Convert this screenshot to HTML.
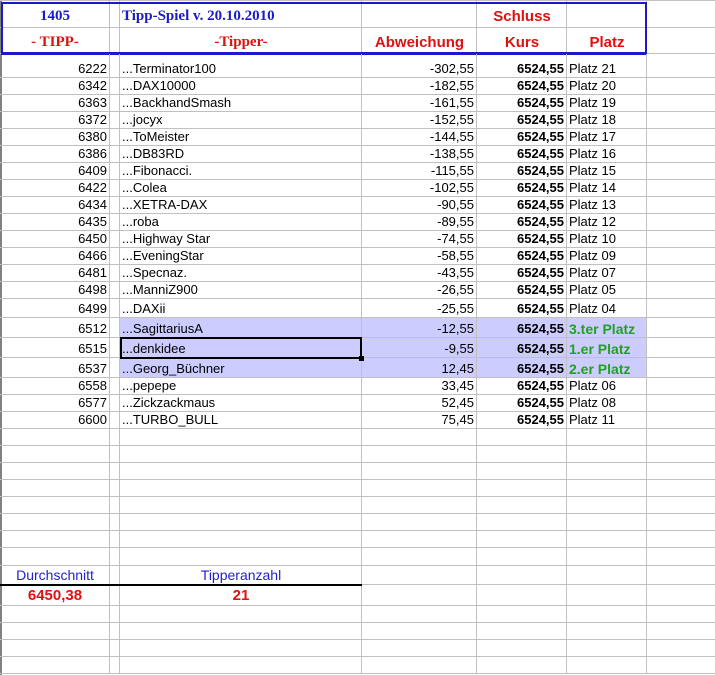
<!DOCTYPE html>
<html><head><meta charset="utf-8"><style>
body{margin:0;width:715px;height:675px;overflow:hidden;background:#fff;font-family:"Liberation Sans",Arial,sans-serif;font-size:13px;position:relative}
.r{position:absolute;left:0;width:715px;display:flex}
.c{box-sizing:border-box;border-right:1px solid #c0c0c0;border-bottom:1px solid #c0c0c0;height:100%;white-space:nowrap;overflow:visible;padding:0 2px;display:flex;align-items:flex-end;padding-bottom:0px;line-height:16px}
.a{width:110px;justify-content:flex-end}
.s{width:10px}
.n{width:242px}
.d{width:115px;justify-content:flex-end}
.e{width:90px;justify-content:flex-end;font-weight:bold}
.f{width:80px}
.g{width:68px;border-right:none}
.hl .n,.hl .d,.hl .e,.hl .f,.hl .s2{background:#ccccff}
.gr{color:#22a022;font-weight:bold;font-size:14px}
.abs{position:absolute}
</style></head><body>
<div class="abs" style="left:0;top:0;width:2px;height:675px;background:#808080"></div>
<div class="abs" style="left:0;top:0;width:715px;height:1px;background:#c0c0c0"></div>
<div class="r" style="top:1px;height:27px"><div class="c a"></div><div class="c s"></div><div class="c n"></div><div class="c d"></div><div class="c e"></div><div class="c f"></div><div class="c g"></div></div>
<div class="r" style="top:28px;height:26px"><div class="c a"></div><div class="c s"></div><div class="c n"></div><div class="c d"></div><div class="c e"></div><div class="c f"></div><div class="c g"></div></div>
<div class="abs" style="left:1px;top:2px;width:642px;height:48px;border:2px solid #1a1acc;border-bottom:3px solid #1a1acc"></div>
<div class="abs" style="left:0;top:8px;width:110px;text-align:center;font:bold 15px 'Liberation Serif',serif;color:#1a1acc">1405</div>
<div class="abs" style="left:122px;top:8px;font:bold 15px 'Liberation Serif',serif;color:#1a1acc">Tipp-Spiel v. 20.10.2010</div>
<div class="abs" style="left:477px;top:8px;width:90px;text-align:center;font:bold 15px 'Liberation Sans',sans-serif;color:#e01010">Schluss</div>
<div class="abs" style="left:0;top:34px;width:110px;text-align:center;font:bold 15px 'Liberation Serif',serif;color:#e01010">- TIPP-</div>
<div class="abs" style="left:120px;top:34px;width:242px;text-align:center;font:bold 15px 'Liberation Serif',serif;color:#e01010">-Tipper-</div>
<div class="abs" style="left:362px;top:34px;width:115px;text-align:center;font:bold 15px 'Liberation Sans',sans-serif;color:#e01010">Abweichung</div>
<div class="abs" style="left:477px;top:34px;width:90px;text-align:center;font:bold 15px 'Liberation Sans',sans-serif;color:#e01010">Kurs</div>
<div class="abs" style="left:567px;top:34px;width:80px;text-align:center;font:bold 15px 'Liberation Sans',sans-serif;color:#e01010">Platz</div>

<div class="r" style="top:54px;height:24px"><div class="c a">6222</div><div class="c s"></div><div class="c n">...Terminator100</div><div class="c d">-302,55</div><div class="c e">6524,55</div><div class="c f">Platz 21</div><div class="c g"></div></div>
<div class="r" style="top:78px;height:17px"><div class="c a">6342</div><div class="c s"></div><div class="c n">...DAX10000</div><div class="c d">-182,55</div><div class="c e">6524,55</div><div class="c f">Platz 20</div><div class="c g"></div></div>
<div class="r" style="top:95px;height:17px"><div class="c a">6363</div><div class="c s"></div><div class="c n">...BackhandSmash</div><div class="c d">-161,55</div><div class="c e">6524,55</div><div class="c f">Platz 19</div><div class="c g"></div></div>
<div class="r" style="top:112px;height:17px"><div class="c a">6372</div><div class="c s"></div><div class="c n">...jocyx</div><div class="c d">-152,55</div><div class="c e">6524,55</div><div class="c f">Platz 18</div><div class="c g"></div></div>
<div class="r" style="top:129px;height:17px"><div class="c a">6380</div><div class="c s"></div><div class="c n">...ToMeister</div><div class="c d">-144,55</div><div class="c e">6524,55</div><div class="c f">Platz 17</div><div class="c g"></div></div>
<div class="r" style="top:146px;height:17px"><div class="c a">6386</div><div class="c s"></div><div class="c n">...DB83RD</div><div class="c d">-138,55</div><div class="c e">6524,55</div><div class="c f">Platz 16</div><div class="c g"></div></div>
<div class="r" style="top:163px;height:17px"><div class="c a">6409</div><div class="c s"></div><div class="c n">...Fibonacci.</div><div class="c d">-115,55</div><div class="c e">6524,55</div><div class="c f">Platz 15</div><div class="c g"></div></div>
<div class="r" style="top:180px;height:17px"><div class="c a">6422</div><div class="c s"></div><div class="c n">...Colea</div><div class="c d">-102,55</div><div class="c e">6524,55</div><div class="c f">Platz 14</div><div class="c g"></div></div>
<div class="r" style="top:197px;height:17px"><div class="c a">6434</div><div class="c s"></div><div class="c n">...XETRA-DAX</div><div class="c d">-90,55</div><div class="c e">6524,55</div><div class="c f">Platz 13</div><div class="c g"></div></div>
<div class="r" style="top:214px;height:17px"><div class="c a">6435</div><div class="c s"></div><div class="c n">...roba</div><div class="c d">-89,55</div><div class="c e">6524,55</div><div class="c f">Platz 12</div><div class="c g"></div></div>
<div class="r" style="top:231px;height:17px"><div class="c a">6450</div><div class="c s"></div><div class="c n">...Highway Star</div><div class="c d">-74,55</div><div class="c e">6524,55</div><div class="c f">Platz 10</div><div class="c g"></div></div>
<div class="r" style="top:248px;height:17px"><div class="c a">6466</div><div class="c s"></div><div class="c n">...EveningStar</div><div class="c d">-58,55</div><div class="c e">6524,55</div><div class="c f">Platz 09</div><div class="c g"></div></div>
<div class="r" style="top:265px;height:17px"><div class="c a">6481</div><div class="c s"></div><div class="c n">...Specnaz.</div><div class="c d">-43,55</div><div class="c e">6524,55</div><div class="c f">Platz 07</div><div class="c g"></div></div>
<div class="r" style="top:282px;height:17px"><div class="c a">6498</div><div class="c s"></div><div class="c n">...ManniZ900</div><div class="c d">-26,55</div><div class="c e">6524,55</div><div class="c f">Platz 05</div><div class="c g"></div></div>
<div class="r" style="top:299px;height:19px"><div class="c a">6499</div><div class="c s"></div><div class="c n">...DAXii</div><div class="c d">-25,55</div><div class="c e">6524,55</div><div class="c f">Platz 04</div><div class="c g"></div></div>
<div class="r hl" style="top:318px;height:20px"><div class="c a">6512</div><div class="c s"></div><div class="c n">...SagittariusA</div><div class="c d">-12,55</div><div class="c e">6524,55</div><div class="c f gr">3.ter Platz</div><div class="c g"></div></div>
<div class="r hl" style="top:338px;height:20px"><div class="c a">6515</div><div class="c s"></div><div class="c n">...denkidee</div><div class="c d">-9,55</div><div class="c e">6524,55</div><div class="c f gr">1.er Platz</div><div class="c g"></div></div>
<div class="r hl" style="top:358px;height:20px"><div class="c a">6537</div><div class="c s"></div><div class="c n">...Georg_Büchner</div><div class="c d">12,45</div><div class="c e">6524,55</div><div class="c f gr">2.er Platz</div><div class="c g"></div></div>
<div class="abs" style="left:120px;top:337px;width:238px;height:18px;border:2px solid #000"></div>
<div class="abs" style="left:359px;top:356px;width:5px;height:5px;background:#000"></div>
<div class="r" style="top:378px;height:17px"><div class="c a">6558</div><div class="c s"></div><div class="c n">...pepepe</div><div class="c d">33,45</div><div class="c e">6524,55</div><div class="c f">Platz 06</div><div class="c g"></div></div>
<div class="r" style="top:395px;height:17px"><div class="c a">6577</div><div class="c s"></div><div class="c n">...Zickzackmaus</div><div class="c d">52,45</div><div class="c e">6524,55</div><div class="c f">Platz 08</div><div class="c g"></div></div>
<div class="r" style="top:412px;height:17px"><div class="c a">6600</div><div class="c s"></div><div class="c n">...TURBO_BULL</div><div class="c d">75,45</div><div class="c e">6524,55</div><div class="c f">Platz 11</div><div class="c g"></div></div>
<div class="r" style="top:429px;height:17px"><div class="c a"></div><div class="c s"></div><div class="c n"></div><div class="c d"></div><div class="c e"></div><div class="c f"></div><div class="c g"></div></div>
<div class="r" style="top:446px;height:17px"><div class="c a"></div><div class="c s"></div><div class="c n"></div><div class="c d"></div><div class="c e"></div><div class="c f"></div><div class="c g"></div></div>
<div class="r" style="top:463px;height:17px"><div class="c a"></div><div class="c s"></div><div class="c n"></div><div class="c d"></div><div class="c e"></div><div class="c f"></div><div class="c g"></div></div>
<div class="r" style="top:480px;height:17px"><div class="c a"></div><div class="c s"></div><div class="c n"></div><div class="c d"></div><div class="c e"></div><div class="c f"></div><div class="c g"></div></div>
<div class="r" style="top:497px;height:17px"><div class="c a"></div><div class="c s"></div><div class="c n"></div><div class="c d"></div><div class="c e"></div><div class="c f"></div><div class="c g"></div></div>
<div class="r" style="top:514px;height:17px"><div class="c a"></div><div class="c s"></div><div class="c n"></div><div class="c d"></div><div class="c e"></div><div class="c f"></div><div class="c g"></div></div>
<div class="r" style="top:531px;height:17px"><div class="c a"></div><div class="c s"></div><div class="c n"></div><div class="c d"></div><div class="c e"></div><div class="c f"></div><div class="c g"></div></div>
<div class="r" style="top:548px;height:18px"><div class="c a"></div><div class="c s"></div><div class="c n"></div><div class="c d"></div><div class="c e"></div><div class="c f"></div><div class="c g"></div></div>
<div class="r" style="top:566px;height:19px"><div class="c a"></div><div class="c s"></div><div class="c n"></div><div class="c d"></div><div class="c e"></div><div class="c f"></div><div class="c g"></div></div>
<div class="r" style="top:585px;height:21px"><div class="c a"></div><div class="c s"></div><div class="c n"></div><div class="c d"></div><div class="c e"></div><div class="c f"></div><div class="c g"></div></div>
<div class="r" style="top:606px;height:17px"><div class="c a"></div><div class="c s"></div><div class="c n"></div><div class="c d"></div><div class="c e"></div><div class="c f"></div><div class="c g"></div></div>
<div class="r" style="top:623px;height:17px"><div class="c a"></div><div class="c s"></div><div class="c n"></div><div class="c d"></div><div class="c e"></div><div class="c f"></div><div class="c g"></div></div>
<div class="r" style="top:640px;height:17px"><div class="c a"></div><div class="c s"></div><div class="c n"></div><div class="c d"></div><div class="c e"></div><div class="c f"></div><div class="c g"></div></div>
<div class="r" style="top:657px;height:17px"><div class="c a"></div><div class="c s"></div><div class="c n"></div><div class="c d"></div><div class="c e"></div><div class="c f"></div><div class="c g"></div></div>
<div class="abs" style="left:0;top:584px;width:362px;height:2px;background:#000"></div>
<div class="abs" style="left:0;top:567px;width:110px;text-align:center;font-size:14px;color:#2222cc">Durchschnitt</div>
<div class="abs" style="left:120px;top:567px;width:242px;text-align:center;font-size:14px;color:#2222cc">Tipperanzahl</div>
<div class="abs" style="left:0;top:587px;width:110px;text-align:center;font-size:15px;font-weight:bold;color:#e01010">6450,38</div>
<div class="abs" style="left:120px;top:587px;width:242px;text-align:center;font-size:15px;font-weight:bold;color:#e01010">21</div>
</body></html>
